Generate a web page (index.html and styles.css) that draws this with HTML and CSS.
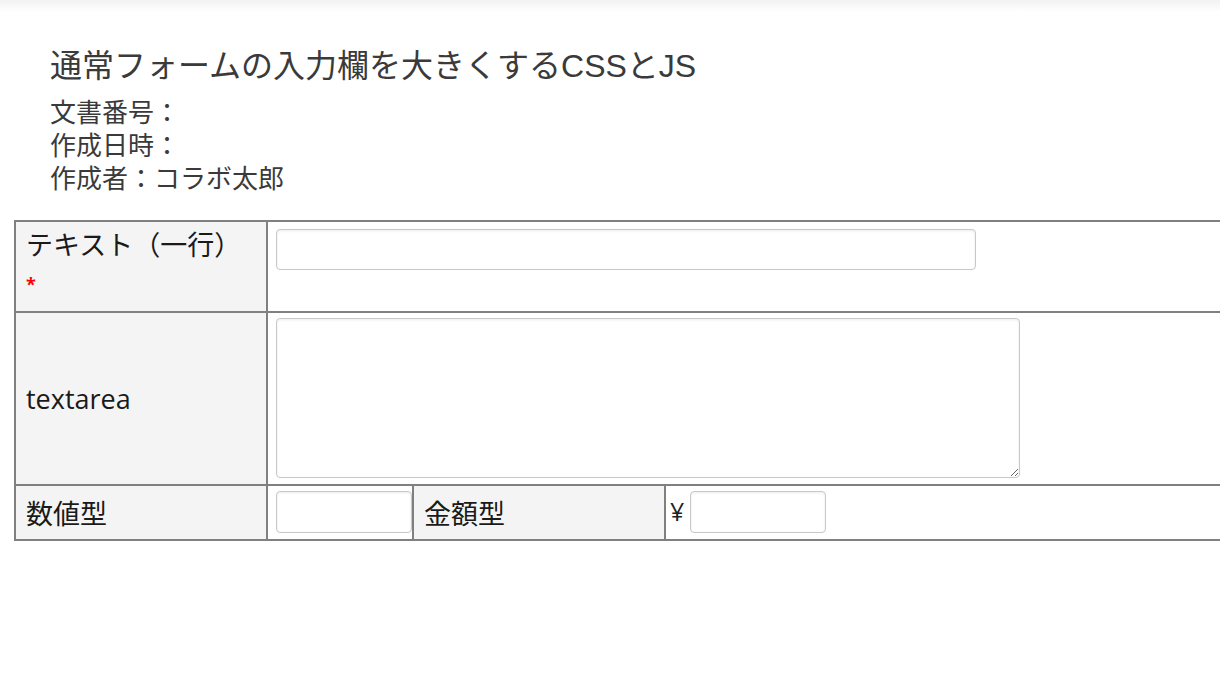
FILE: index.html
```html
<!DOCTYPE html>
<html lang="ja">
<head>
<meta charset="utf-8">
<title>通常フォームの入力欄を大きくするCSSとJS</title>
<link rel="stylesheet" href="styles.css">
</head>
<body>
<div class="page">
  <div class="topbar"></div>
  <header class="header">
    <h1 class="title">通常フォームの入力欄を大きくするCSSとJS</h1>
    <div class="meta">
      <div>文書番号：</div>
      <div>作成日時：</div>
      <div>作成者：コラボ太郎</div>
    </div>
  </header>
  <div class="form-wrap">
    <table class="form">
      <colgroup>
        <col class="c1">
        <col class="c2">
        <col class="c3">
        <col class="c4">
      </colgroup>
      <tr class="row-text">
        <td class="label top">
          <div class="label-text">テキスト（一行）</div>
          <div class="required">*</div>
        </td>
        <td class="field top" colspan="3"><input class="inp inp-wide" type="text"></td>
      </tr>
      <tr class="row-area">
        <td class="label">textarea</td>
        <td class="field area" colspan="3"><textarea class="ta"></textarea></td>
      </tr>
      <tr class="row-num">
        <td class="label">数値型</td>
        <td class="field small"><input class="inp inp-small" type="text"></td>
        <td class="label">金額型</td>
        <td class="field money"><span class="yen">¥</span><input class="inp inp-small" type="text"></td>
      </tr>
    </table>
  </div>
</div>
</body>
</html>
```

FILE: styles.css
```css
html, body {
  margin: 0;
  padding: 0;
  background: #fff;
  overflow: hidden;
}

.page {
  font-family: "Liberation Sans", "Noto Sans CJK JP", sans-serif;
  color: #3a3a3a;
}

.topbar {
  height: 12px;
  background: linear-gradient(to bottom, #f2f2f2, #ffffff);
}

.header {
  padding: 34px 0 0 50px;
}

.title {
  margin: 0;
  font-size: 32px;
  line-height: 40px;
  font-weight: normal;
  color: #3a3a3a;
}

.meta {
  margin-top: 11px;
  font-size: 26px;
  line-height: 33px;
}

.form-wrap {
  margin-top: 24px;
  padding-left: 14px;
}

.form {
  border-collapse: collapse;
  table-layout: fixed;
  width: 1300px;
  font-family: "Open Sans", "Noto Sans CJK JP", sans-serif;
  font-size: 27px;
  color: #1a1a1a;
}

.c1 { width: 252px; }
.c2 { width: 146px; }
.c3 { width: 252px; }

.form td {
  border: 2px solid #808080;
  padding: 0;
}

.label {
  background: #f4f4f4;
  padding: 0 10px !important;
  vertical-align: middle;
}

.label.top {
  vertical-align: top;
  padding: 8px 10px !important;
}

.label-text {
  line-height: 30px;
}

.required {
  color: #ff0000;
  font-size: 18px;
  font-weight: bold;
  line-height: 20px;
  height: 29px;
  margin-top: 14px;
}

.field {
  vertical-align: top;
  padding: 7px 8px !important;
}

.field.area {
  padding: 5px 8px 6px !important;
}

.field.small {
  padding: 5px 1px 6px 8px !important;
}

.field.money {
  padding: 5px 4px 6px !important;
}

.yen {
  display: inline-block;
  vertical-align: top;
  font-size: 25px;
  line-height: 40px;
  margin-right: 6px;
  color: #222;
}

.inp {
  display: inline-block;
  box-sizing: border-box;
  height: 41px;
  margin: 0;
  border: 1px solid #c8c8c8;
  border-radius: 4px;
  background: #fff;
  box-shadow: inset 0 1px 3px rgba(0, 0, 0, 0.08);
  font-size: 16px;
  vertical-align: top;
}

.inp-wide { width: 700px; }

.inp-small { width: 136px; height: 42px; }

.ta {
  display: block;
  box-sizing: border-box;
  width: 744px;
  height: 160px;
  margin: 0;
  border: 1px solid #c8c8c8;
  border-radius: 4px;
  background: #fff;
  box-shadow: inset 0 1px 3px rgba(0, 0, 0, 0.08);
  font-size: 16px;
}
```
